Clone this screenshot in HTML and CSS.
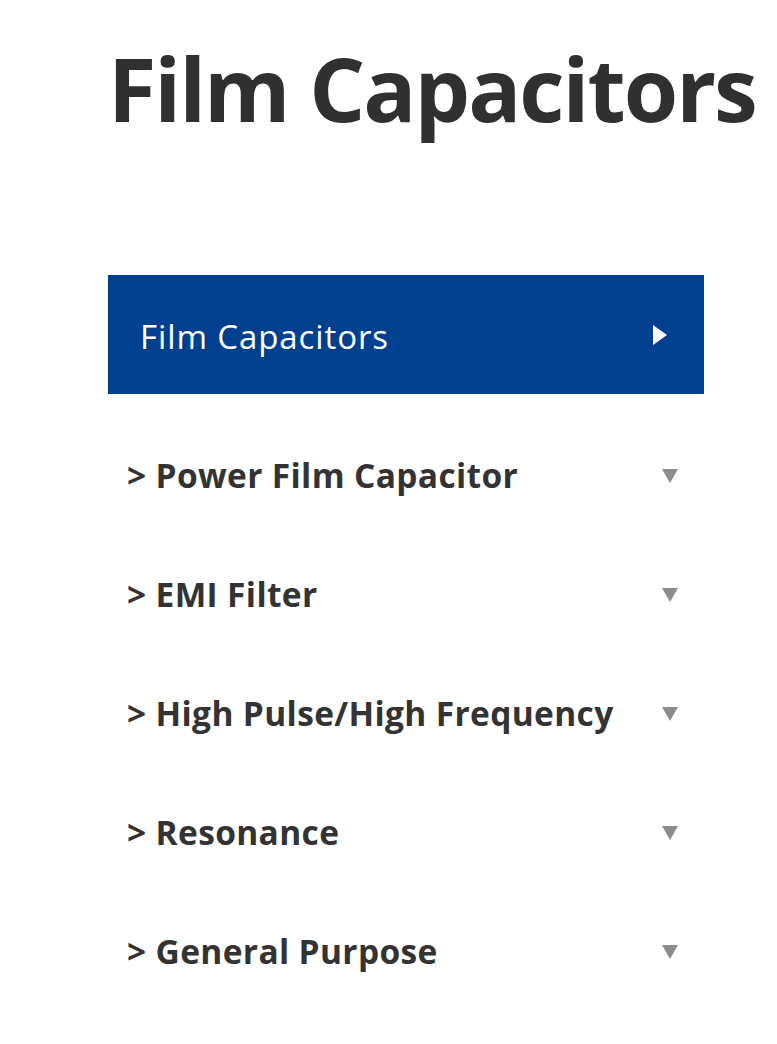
FILE: index.html
```html
<!DOCTYPE html>
<html lang="en">
<head>
<meta charset="utf-8">
<title>Film Capacitors</title>
<link rel="stylesheet" href="styles.css">
</head>
<body>
<main class="page">
  <h1 class="title">Film Capacitors</h1>
  <nav class="menu">
    <a class="menu-head" href="#">
      <span class="menu-head-label">Film Capacitors</span>
      <svg class="arrow-right" width="14" height="20" viewBox="0 0 14 20" aria-hidden="true"><polygon points="0,0 14,10 0,20" fill="#fff"/></svg>
    </a>
    <ul class="menu-list">
      <li class="menu-item"><span class="menu-label">&gt; Power Film Capacitor</span><svg class="arrow-down" width="16" height="14" viewBox="0 0 16 14" aria-hidden="true"><polygon points="0,0 16,0 8,14" fill="#8c8c8c"/></svg></li>
      <li class="menu-item"><span class="menu-label">&gt; EMI Filter</span><svg class="arrow-down" width="16" height="14" viewBox="0 0 16 14" aria-hidden="true"><polygon points="0,0 16,0 8,14" fill="#8c8c8c"/></svg></li>
      <li class="menu-item"><span class="menu-label">&gt; High Pulse/High Frequency</span><svg class="arrow-down" width="16" height="14" viewBox="0 0 16 14" aria-hidden="true"><polygon points="0,0 16,0 8,14" fill="#8c8c8c"/></svg></li>
      <li class="menu-item"><span class="menu-label">&gt; Resonance</span><svg class="arrow-down" width="16" height="14" viewBox="0 0 16 14" aria-hidden="true"><polygon points="0,0 16,0 8,14" fill="#8c8c8c"/></svg></li>
      <li class="menu-item"><span class="menu-label">&gt; General Purpose</span><svg class="arrow-down" width="16" height="14" viewBox="0 0 16 14" aria-hidden="true"><polygon points="0,0 16,0 8,14" fill="#8c8c8c"/></svg></li>
    </ul>
  </nav>
</main>
</body>
</html>
```
FILE: styles.css
```css
html, body {
  margin: 0;
  padding: 0;
  background: #ffffff;
}
body {
  font-family: "Open Sans", "Noto Sans", sans-serif;
  color: #333333;
}
.page {
  padding: 44px 73px 0 108px;
}
.title {
  margin: 0;
  font-size: 88px;
  line-height: 1;
  font-weight: 700;
  letter-spacing: -2px;
  color: #303030;
  white-space: nowrap;
}
.menu {
  margin-top: 143px;
  width: 596px;
}
.menu-head {
  display: flex;
  align-items: center;
  justify-content: space-between;
  height: 119px;
  box-sizing: border-box;
  padding: 3px 37px 0 32px;
  background: #00408f;
  color: #ffffff;
  text-decoration: none;
}
.menu-head-label {
  font-size: 33px;
  line-height: 1;
  font-weight: 400;
  letter-spacing: 0.9px;
}
.arrow-right {
  display: block;
  margin-top: -3px;
}
.menu-list {
  list-style: none;
  margin: 22px 0 0;
  padding: 0;
}
.menu-item {
  display: flex;
  align-items: center;
  justify-content: space-between;
  height: 119px;
  padding: 0 26px 0 19px;
}
.menu-label {
  font-size: 33.5px;
  line-height: 1;
  font-weight: 700;
  letter-spacing: 0.35px;
  color: #333333;
}
.arrow-down {
  display: block;
}
```
